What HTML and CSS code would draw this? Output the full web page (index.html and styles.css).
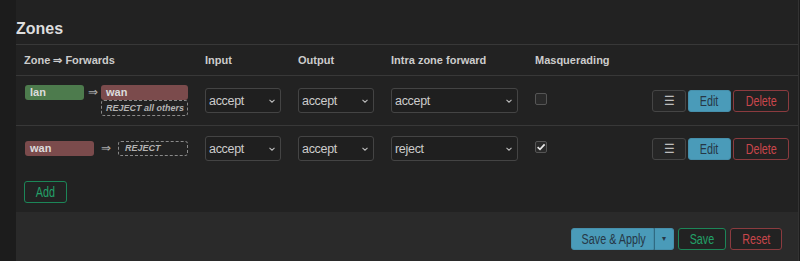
FILE: index.html
```html
<!DOCTYPE html>
<html>
<head>
<meta charset="utf-8">
<link rel="stylesheet" href="styles.css">
</head>
<body>
<div class="page">
  <div class="panel">
    <h3 class="title">Zones</h3>
    <div class="row head">
      <div class="cell">Zone ⇒ Forwards</div>
      <div class="cell">Input</div>
      <div class="cell">Output</div>
      <div class="cell">Intra zone forward</div>
      <div class="cell">Masquerading</div>
      <div class="cell"></div>
    </div>
    <div class="row r1">
      <div class="cell zonefwd">
        <span class="badge green w59">lan</span>
        <span class="arrow w17">⇒</span>
        <div class="dests">
          <span class="badge red">wan</span>
          <span class="dashed">REJECT all others</span>
        </div>
      </div>
      <div class="cell"><select class="sel short"><option>accept</option></select></div>
      <div class="cell"><select class="sel short"><option>accept</option></select></div>
      <div class="cell"><select class="sel long"><option>accept</option></select></div>
      <div class="cell"><span class="check"></span></div>
      <div class="cell actions">
        <button class="btn menu">☰</button>
        <button class="btn edit"><span class="t">Edit</span></button>
        <button class="btn del"><span class="t">Delete</span></button>
      </div>
    </div>
    <div class="row r2">
      <div class="cell zonefwd">
        <span class="badge red w69">wan</span>
        <span class="arrow w24">⇒</span>
        <span class="dashed w70">REJECT</span>
      </div>
      <div class="cell"><select class="sel short"><option>accept</option></select></div>
      <div class="cell"><select class="sel short"><option>accept</option></select></div>
      <div class="cell"><select class="sel long"><option>reject</option></select></div>
      <div class="cell"><span class="check on"><svg width="10" height="10" viewBox="0 0 10 10"><path d="M1.6 5.2 L4 7.4 L8.6 2.4" fill="none" stroke="#e8e8e8" stroke-width="1.7"/></svg></span></div>
      <div class="cell actions">
        <button class="btn menu">☰</button>
        <button class="btn edit"><span class="t">Edit</span></button>
        <button class="btn del"><span class="t">Delete</span></button>
      </div>
    </div>
    <div class="addrow"><button class="btn add"><span class="t">Add</span></button></div>
    <div class="footer">
      <div class="split">
        <button class="btn apply"><span class="t">Save &amp; Apply</span></button><button class="btn apply caret">▾</button>
      </div>
      <button class="btn save"><span class="t">Save</span></button>
      <button class="btn reset"><span class="t">Reset</span></button>
    </div>
  </div>
</div>
</body>
</html>
```
FILE: styles.css
```css
* { box-sizing: border-box; }
body {
  margin: 0;
  background: #1c1c1c;
  font-family: "Liberation Sans", Arial, sans-serif;
  color: #cfcfcf;
}
.page {
  padding-left: 16px;
  height: 261px;
  overflow: hidden;
}
.panel {
  width: 783px;
  min-height: 261px;
  background: #222222;
  border-right: 1px solid #333;
}
.title {
  margin: 0 0 6px 0;
  padding-top: 20px;
  font-size: 16px;
  line-height: 18px;
  height: 38px;
  font-weight: bold;
  color: #dddddd;
}
.row {
  display: grid;
  grid-template-columns: 181px 93px 93px 144px 1fr auto;
  align-items: center;
  border-bottom: 1px solid #383838;
}
.cell { padding: 0 8px; }
.head {
  height: 32px;
  border-top: 1px solid #383838;
  font-size: 11px;
  font-weight: bold;
  color: #cccccc;
}
.r1 { height: 50px; }
.r2 { height: 45px; border-bottom: none; }
.zonefwd {
  display: flex;
  align-items: flex-start;
  padding-left: 9px;
}
.badge {
  display: block;
  height: 15px;
  line-height: 15px;
  border-radius: 3px;
  padding-left: 5px;
  font-size: 11px;
  font-weight: bold;
  color: #dcdcdc;
}
.green { background: #4d7b4d; }
.red { background: #7b4b4c; }
.w59 { width: 59px; }
.w69 { width: 69px; }
.w70 { width: 70px; }
.arrow {
  display: block;
  font-size: 12px;
  line-height: 15px;
  color: #aaaaaa;
  text-align: center;
}
.w17 { width: 17px; }
.w24 { width: 24px; }
.dests {
  display: flex;
  flex-direction: column;
  width: 87px;
}
.dashed {
  display: block;
  height: 16px;
  line-height: 14px;
  border: 1px dashed #8a8a8a;
  border-radius: 3px;
  padding-left: 4px;
  font-size: 9px;
  font-style: italic;
  font-weight: bold;
  color: #b4b4b4;
  white-space: nowrap;
}
.r2 .dashed { height: 15px; line-height: 13px; padding-left: 6px; }
.sel {
  appearance: none;
  -webkit-appearance: none;
  display: block;
  height: 25px;
  border: 1px solid #444;
  border-radius: 3px;
  background-color: #1f1f1f;
  background-image: url("data:image/svg+xml;utf8,<svg xmlns='http://www.w3.org/2000/svg' width='6' height='4' viewBox='0 0 6 4'><path d='M0.5 0.8 L3 3.2 L5.5 0.8' fill='none' stroke='%23bbbbbb' stroke-width='1.1'/></svg>");
  background-repeat: no-repeat;
  background-position: right 5px center;
  color: #cccccc;
  font-family: "Liberation Sans", Arial, sans-serif;
  font-size: 12.5px;
  letter-spacing: -0.3px;
  padding: 0 3px;
}
.short { width: 76px; }
.long { width: 127px; }
.check {
  display: block;
  width: 12px;
  height: 12px;
  border: 1px solid #555;
  border-radius: 2px;
  background: #2a2a2a;
  margin-bottom: 3px;
  position: relative;
}
.check svg { position: absolute; left: 0; top: 0; }
.actions {
  display: flex;
  gap: 2px;
  padding-right: 9px;
}
.btn {
  height: 22px;
  border: 1px solid #444;
  border-radius: 3px;
  background: #222;
  color: #ccc;
  font-family: "Liberation Sans", Arial, sans-serif;
  font-size: 14px;
  padding: 0;
  line-height: 20px;
  white-space: nowrap;
  overflow: hidden;
}
.btn .t {
  display: inline-block;
  transform: scaleX(0.77);
}
.menu { width: 34px; background: #262626; border-color: #454545; font-size: 12px; color: #bdbdbd; }
.edit { width: 43px; background: #4a9bb9; border-color: #468fab; color: #263746; }
.del { width: 56px; border-color: #8b3b3f; color: #c9464b; }
.addrow {
  height: 41px;
  padding: 10px 0 0 8px;
}
.add { width: 43px; border-color: #1c8658; color: #22a068; }
.footer {
  height: 50px;
  background: #2a2a2a;
  display: flex;
  justify-content: flex-end;
  align-items: flex-start;
  gap: 4px;
  padding: 16px 16px 0 0;
}
.split { display: flex; }
.apply {
  background: #4a9bb9;
  border-color: #468fab;
  color: #263746;
  width: 83px;
  border-radius: 3px 0 0 3px;
}
.caret {
  width: 20px;
  font-size: 8px;
  border-radius: 0 3px 3px 0;
  border-left: 1px solid #2f6a82;
}
.save { width: 48px; border-color: #1c8658; color: #22a068; }
.reset { width: 52px; border-color: #8b3b3f; color: #c9464b; }
```
